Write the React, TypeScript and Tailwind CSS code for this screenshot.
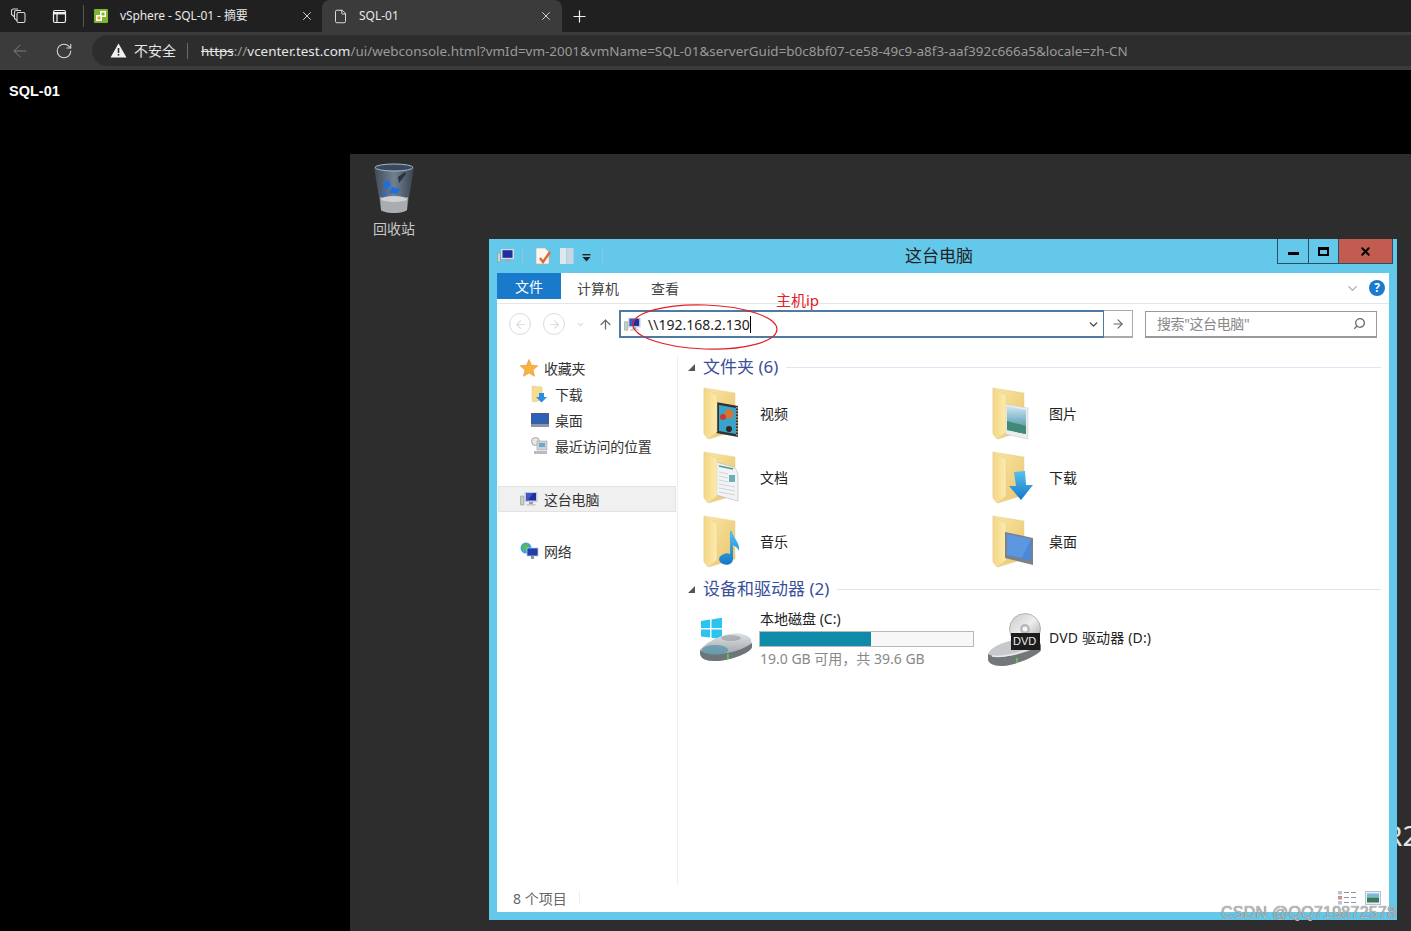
import React from 'react';
import { ArrowLeft, ChevronDown, File, Plus, RotateCw, Search, X, ArrowRight, ArrowUp } from 'lucide-react';

const cjk = { fontFamily: '"Noto Sans", "Noto Sans CJK SC", sans-serif' };

type FolderKind = 'video' | 'picture' | 'doc' | 'download' | 'music' | 'desktop';

const FolderIcon = ({ kind }: { kind: FolderKind }) => (
    <svg width="46" height="56" viewBox="0 0 46 56" className="shrink-0">
        <defs>
            <linearGradient id="fb" x1="0" y1="0" x2="1" y2="1">
                <stop offset="0" stopColor="#fbe7a4" />
                <stop offset="1" stopColor="#e8c46c" />
            </linearGradient>
            <linearGradient id="ff" x1="0" y1="0" x2="1" y2="0">
                <stop offset="0" stopColor="#f5d684" />
                <stop offset="1" stopColor="#fcebb0" />
            </linearGradient>
            <linearGradient id="pic" x1="0" y1="0" x2="0" y2="1">
                <stop offset="0" stopColor="#cfe6f2" />
                <stop offset="0.5" stopColor="#7fb6c8" />
                <stop offset="1" stopColor="#4b8a6c" />
            </linearGradient>
            <linearGradient id="arr" x1="0" y1="0" x2="0" y2="1">
                <stop offset="0" stopColor="#58c0ef" />
                <stop offset="1" stopColor="#1578c8" />
            </linearGradient>
        </defs>
        <polygon points="1,1 32,6 32,44 6,52 1,46" fill="url(#fb)" stroke="#e3cf95" strokeWidth="0.5" />
        {kind === 'video' && (
            <g>
                <polygon points="13,15 35,19 35,50 13,46" fill="#33322f" />
                <polygon points="16,18 33,21 33,47 16,44" fill="#3aa3c9" />
                <circle cx="26" cy="27" r="4.5" fill="#d9752c" />
                <circle cx="20" cy="30" r="3" fill="#c43b3b" />
                <circle cx="26" cy="42" r="3" fill="#2d2a28" />
                <line x1="34" y1="20" x2="34" y2="49" stroke="#a8b49a" strokeWidth="1.5" strokeDasharray="1.5 1.5" />
            </g>
        )}
        {kind === 'picture' && (
            <g>
                <polygon points="13,17 36,21 36,52 13,47" fill="#ececec" stroke="#c4c4c4" strokeWidth="0.5" />
                <polygon points="15,19 34,23 34,47 15,43" fill="url(#pic)" />
                <polygon points="15,34 34,39 34,47 15,43" fill="#3f8a78" />
            </g>
        )}
        {kind === 'doc' && (
            <g>
                <path d="M13,11 L30,16 C34,18 35,22 35,26 L35,50 L13,44 Z" fill="#f2f3f6" stroke="#bcbfc6" strokeWidth="0.7" />
                <line x1="16" y1="15" x2="30" y2="18" stroke="#4f9a8c" strokeWidth="1.6" />
                <rect x="26" y="24" width="6" height="7" fill="#6bb0b8" />
                <g stroke="#c2c6ce" strokeWidth="0.7">
                    <line x1="16" y1="21" x2="25" y2="23" />
                    <line x1="16" y1="25" x2="25" y2="27" />
                    <line x1="16" y1="29" x2="25" y2="31" />
                    <line x1="16" y1="33" x2="32" y2="36" />
                    <line x1="16" y1="37" x2="32" y2="40" />
                    <line x1="16" y1="41" x2="32" y2="44" />
                </g>
            </g>
        )}
        <polygon points="1,1 14,8 14,45 5,52 1,47" fill="url(#ff)" stroke="#e3cf95" strokeWidth="0.5" />
        {kind === 'download' && (
            <polygon points="22,21 33,20 34,34 41,34 29,49 17,35 24,35" fill="url(#arr)" />
        )}
        {kind === 'music' && (
            <g>
                <path d="M27,16 L29,16 C30,24 37,26 36,36 C35,33 32,31 30,30 L30,44 C30,49 24,51 20,49 C15,47 15,42 19,40 C22,38 25,38 27,39 Z" fill="url(#arr)" />
            </g>
        )}
        {kind === 'desktop' && (
            <g>
                <polygon points="13,17 41,23 41,50 13,43" fill="#7d8084" />
                <polygon points="15,19 39,24 39,46 15,40" fill="#4a88dc" />
                <polygon points="15,19 39,24 30,43 15,40" fill="#6ea6e6" opacity="0.5" />
            </g>
        )}
    </svg>
);

const ComputerIcon = ({ size = 18 }: { size?: number }) => (
    <svg width={size} height={size} viewBox="0 0 18 18" className="shrink-0">
        <rect x="0.5" y="6" width="3.5" height="9" rx="0.5" fill="#c9d0c8" stroke="#6f8f76" strokeWidth="0.5" />
        <rect x="4.5" y="2" width="13" height="10" fill="#c7c9d6" />
        <rect x="6" y="3" width="10" height="7.5" fill="#1f2f9f" />
        <polygon points="6,3 13,3 8,10.5 6,10.5" fill="#3f58c8" />
        <rect x="9" y="12" width="4" height="2" fill="#9aa0a8" />
        <rect x="6.5" y="14" width="9" height="1.5" fill="#c2c6cc" />
    </svg>
);

const WinHandle = () => (
    <svg width="18" height="16" viewBox="0 0 18 16">
        <rect x="0.5" y="5" width="3" height="9" fill="#cdd4d0" stroke="#7b9383" strokeWidth="0.5" />
        <rect x="4" y="1" width="13" height="10" fill="#d8dbe4" />
        <rect x="5.5" y="2.2" width="10" height="7.6" fill="#1f2f9f" />
        <rect x="9" y="11" width="4" height="3" fill="#a4aab2" />
    </svg>
);

const CircleNav = ({ dir }: { dir: 'l' | 'r' }) => (
    <div className="w-[22px] h-[22px] rounded-full border border-[#dcdcdc] flex items-center justify-center text-[#dcdcdc]">
        {dir === 'l' ? <ArrowLeft size={13} /> : <ArrowRight size={13} />}
    </div>
);

const CDriveIcon = () => (
    <svg width="54" height="46" viewBox="0 0 54 46" className="shrink-0">
        <defs>
            <linearGradient id="dsk" x1="0" y1="0" x2="0" y2="1">
                <stop offset="0" stopColor="#dfe2e4" />
                <stop offset="1" stopColor="#8d9499" />
            </linearGradient>
        </defs>
        <g fill="#2bc3ef">
            <polygon points="2,4 11,2.6 11,11 2,11" />
            <polygon points="12.5,2.4 23,0.8 23,11 12.5,11" />
            <polygon points="2,12.5 11,12.5 11,20.5 2,19.4" />
            <polygon points="12.5,12.5 23,12.5 23,22 12.5,20.8" />
        </g>
        <path d="M1,33 C6,27 16,20 30,17 C38,15 48,17 52,22 L53,30 C52,36 30,44 16,44 C6,44 1,41 1,36 Z" fill="url(#dsk)" />
        <path d="M1,33 C8,40 38,38 53,26 L53,30 C52,36 30,44 16,44 C6,44 1,41 1,36 Z" fill="#6d7579" />
        <ellipse cx="16" cy="33" rx="13" ry="5" fill="#5c97ad" opacity="0.8" />
        <ellipse cx="32" cy="21" rx="10" ry="3" fill="#8b9398" opacity="0.55" />
        <rect x="28" y="37" width="1.8" height="5" fill="#58d23c" />
    </svg>
);

const DvdIcon = () => (
    <svg width="56" height="54" viewBox="0 0 56 54" className="shrink-0">
        <defs>
            <linearGradient id="cd" x1="0" y1="0" x2="1" y2="1">
                <stop offset="0" stopColor="#c9c9c9" />
                <stop offset="0.5" stopColor="#eeeeee" />
                <stop offset="1" stopColor="#9c9c9c" />
            </linearGradient>
        </defs>
        <path d="M1,41 C4,33 18,28 36,25 C44,24 52,27 54,31 L54,37 C52,42 30,52 15,53 C6,53 1,50 1,46 Z" fill="#c6cacc" />
        <path d="M1,41 C10,47 40,42 54,31 L54,37 C52,42 30,52 15,53 C6,53 1,50 1,46 Z" fill="#71777b" />
        <path d="M5,43 C16,45 34,40 46,34" stroke="#e9ecee" strokeWidth="1.5" fill="none" />
        <rect x="29" y="45" width="1.8" height="5" fill="#58d23c" />
        <circle cx="38" cy="16" r="15.5" fill="url(#cd)" stroke="#8f8f8f" strokeWidth="0.6" />
        <circle cx="38" cy="16" r="5" fill="#b9b9b9" />
        <circle cx="38" cy="16" r="2.5" fill="#f5f5f5" />
        <rect x="24" y="20" width="29" height="17" fill="#1c1c1c" />
    </svg>
);

const NavItem = ({ icon, label, className }: { icon: React.ReactNode; label: string; className: string }) => (
    <div className={`flex items-center h-[26px] text-[14px] tracking-[-0.2px] text-[#333] ${className}`}>
        <span className="w-[24px] flex items-center shrink-0">{icon}</span>
        {label}
    </div>
);

const GroupHeader = ({ title }: { title: string }) => (
    <div className="flex items-center h-[24px] -ml-[1px]">
        <svg width="9" height="9" viewBox="0 0 9 9" className="mr-[6px] shrink-0"><polygon points="8,1 8,8 1,8" fill="#555" /></svg>
        <span className="text-[17px] text-[#3a4f9a] whitespace-nowrap ml-[1px]">{title}</span>
        <div className="flex-1 h-px bg-[#dde6f3] ml-[8px]" />
    </div>
);

const FolderTile = ({ kind, label }: { kind: FolderKind; label: string }) => (
    <div className="flex items-center h-[64px] pl-[1px]">
        <FolderIcon kind={kind} />
        <span className="ml-[11px] mb-[4px] text-[14px] text-[#222]">{label}</span>
    </div>
);

export default function App() {
    return (
        <div className="w-[1411px] h-[931px] overflow-hidden bg-black relative flex flex-col" style={cjk}>
            {/* Browser tabs */}
            <div className="h-[32px] bg-[#202020] flex items-stretch text-[#e8e8e8] text-[12px] shrink-0">
                <div className="w-[36px] flex items-center justify-center">
                    <svg width="18" height="16" viewBox="0 0 18 16" fill="none" stroke="#d8d8d8" strokeWidth="1.1">
                        <rect x="8" y="4.5" width="8" height="10" rx="1.5" />
                        <path d="M8,12.5 L5.5,10.5 V4 C5.5,3 6.5,2.5 7.5,2.5 H12" />
                        <path d="M5.5,9 L2.5,6.5 V3 C2.5,2 3.5,1 4.5,1 H9" />
                    </svg>
                </div>
                <div className="w-[47px] flex items-center justify-center">
                    <svg width="15" height="15" viewBox="0 0 15 15" fill="none" stroke="#f0f0f0" strokeWidth="1.2">
                        <rect x="1.5" y="1.5" width="12" height="12" rx="1.5" />
                        <path d="M1.5,4.2 H13.5" strokeWidth="2.4" />
                        <path d="M5,4 V13.5" />
                    </svg>
                </div>
                <div className="w-px h-[22px] bg-[#555] self-center" />
                <div className="w-[238px] flex items-center pl-[9px] pr-[8px]">
                    <svg width="16" height="16" viewBox="0 0 16 16" className="shrink-0">
                        <rect x="1" y="1" width="14" height="14" rx="1" fill="#7eb62f" />
                        <rect x="7" y="3" width="6" height="6" fill="#fff" />
                        <rect x="8.5" y="4.5" width="3" height="3" fill="#7eb62f" />
                        <rect x="3" y="7" width="6" height="6" fill="#fff" />
                        <rect x="4.5" y="8.5" width="3" height="3" fill="#f1a81e" />
                    </svg>
                    <span className="ml-[11px] flex-1 whitespace-nowrap tracking-[-0.1px]">vSphere - SQL-01 - 摘要</span>
                    <X size={14} strokeWidth={1.6} className="text-[#ddd]" />
                </div>
                <div className="w-[240px] bg-[#3b3b3b] rounded-t-[8px] flex items-center pl-[11px] pr-[9px]">
                    <File size={15} strokeWidth={1.4} className="text-[#f0f0f0]" />
                    <span className="ml-[11px] flex-1">SQL-01</span>
                    <X size={14} strokeWidth={1.6} className="text-[#ddd]" />
                </div>
                <div className="w-[34px] flex items-center justify-center">
                    <Plus size={19} strokeWidth={1.5} className="text-[#f0f0f0]" />
                </div>
            </div>
            {/* Browser toolbar */}
            <div className="h-[38px] bg-[#3b3b3b] flex items-center shrink-0">
                <div className="w-[40px] flex justify-center"><ArrowLeft size={20} strokeWidth={1.2} className="text-[#7d7d7d]" /></div>
                <div className="w-[48px] flex justify-center"><RotateCw size={18} strokeWidth={1.4} className="text-[#d8d8d8]" /></div>
                <div className="flex-1 h-[31px] bg-[#2d2d2d] rounded-l-full ml-[4px] -mt-[1px] flex items-center pl-[18px]">
                    <svg width="17" height="15" viewBox="0 0 17 15" className="shrink-0">
                        <path d="M8.5,0.5 L16.5,14.5 H0.5 Z" fill="#f2f2f2" />
                        <rect x="7.7" y="5" width="1.6" height="5" fill="#2d2d2d" />
                        <rect x="7.7" y="11" width="1.6" height="1.6" fill="#2d2d2d" />
                    </svg>
                    <span className="ml-[7px] text-[14px] text-[#e6e6e6]">不安全</span>
                    <div className="w-px h-[16px] bg-[#6b6b6b] ml-[11px]" />
                    <span className="ml-[13px] mt-[2px] text-[13.45px] whitespace-nowrap text-[#9a9a9a]">
                        <span className="line-through text-[#e6e6e6]">https</span>
                        ://<span className="text-[#e6e6e6]">vcenter.test.com</span>
                        /ui/webconsole.html?vmId=vm-2001&amp;vmName=SQL-01&amp;serverGuid=b0c8bf07-ce58-49c9-a8f3-aaf392c666a5&amp;locale=zh-CN
                    </span>
                </div>
            </div>
            {/* Console header */}
            <div className="h-[84px] pl-[9px] pt-[13px] text-white text-[14.5px] font-bold leading-[17px] shrink-0" style={{ fontFamily: '"Liberation Sans", sans-serif' }}>
                SQL-01
            </div>
            {/* Remote desktop */}
            <div className="flex-1 ml-[350px] bg-[#2d2d2d] relative">
                <div className="absolute left-[20px] top-[9px] w-[48px] flex flex-col items-center">
                    <svg width="42" height="52" viewBox="0 0 42 52">
                        <defs>
                            <linearGradient id="bin" x1="0" y1="0" x2="1" y2="0">
                                <stop offset="0" stopColor="#3f4a56" />
                                <stop offset="0.5" stopColor="#6f8292" />
                                <stop offset="1" stopColor="#39434e" />
                            </linearGradient>
                        </defs>
                        <path d="M1,4 C8,0 34,0 41,4 L34,47 C30,51 12,51 8,47 Z" fill="url(#bin)" />
                        <ellipse cx="21" cy="4.5" rx="19" ry="3.5" fill="#37495c" stroke="#a9b6c2" strokeWidth="1" />
                        <path d="M10,20 L16,17 L18,23 L13,27 Z M19,24 L27,26 L24,31 L16,30 Z M9,27 L13,30 L12,34 L10,32 Z" fill="#1f6fe0" />
                        <path d="M25,14 L32,9 L33,11 L26,20 Z" fill="#2b333c" />
                        <path d="M7,34 C12,36 30,36 35,34 L34,47 C30,51 12,51 8,47 Z" fill="#a9adb1" />
                        <ellipse cx="21" cy="36" rx="13" ry="3" fill="#cfd1d3" />
                    </svg>
                    <span className="text-[14px] text-[#c8c8c8] whitespace-nowrap mt-[5px] leading-[18px]">回收站</span>
                </div>
                <span className="absolute left-[1035px] top-[665px] text-[28px] text-[#e4e4e4] leading-[32px] whitespace-nowrap">R2</span>

                {/* Explorer window */}
                <div className="absolute left-[139px] top-[85px] w-[908px] h-[681px] bg-[#63c8ea] flex flex-col px-[8px] pb-[8px]">
                    {/* Title bar */}
                    <div className="h-[34px] flex items-center relative shrink-0">
                        <WinHandle />
                        <div className="w-px h-[14px] bg-[#9dc3d6] ml-[7px]" />
                        <svg width="18" height="18" viewBox="0 0 18 18" className="ml-[11px]">
                            <path d="M2,1 H11 L15,5 V17 H2 Z" fill="#fbf7ef" stroke="#b9b2a6" strokeWidth="0.7" />
                            <path d="M6,11 L9,15 L16,5" stroke="#e0663a" strokeWidth="2.4" fill="none" />
                        </svg>
                        <svg width="16" height="18" viewBox="0 0 16 18" className="ml-[7px]">
                            <rect x="1" y="1" width="6.5" height="16" fill="#dfe7ef" />
                            <rect x="8" y="1" width="6.5" height="16" fill="#c9d6e2" />
                        </svg>
                        <svg width="9" height="8" viewBox="0 0 9 8" className="ml-[7px] mt-[3px]">
                            <rect x="0.5" y="0" width="8" height="1.4" fill="#222" />
                            <polygon points="0.5,3 8.5,3 4.5,7.5" fill="#222" />
                        </svg>
                        <div className="w-px h-[14px] bg-[#9dc3d6] ml-[11px]" />
                        <div className="flex-1 text-center text-[17px] text-[#222] pr-[2px]">这台电脑</div>
                        <div className="self-start flex h-[25px] -mr-[4px] border border-t-0 border-[#2a4f63] w-[116px] shrink-0">
                            <div className="w-[31px] border-r border-[#2a4f63] flex items-center justify-center">
                                <div className="w-[11px] h-[3px] bg-black mt-[4px]" />
                            </div>
                            <div className="w-[30px] border-r border-[#2a4f63] flex items-center justify-center">
                                <div className="w-[11px] h-[9px] border-2 border-t-[3px] border-black" />
                            </div>
                            <div className="flex-1 bg-[#c25b50] flex items-center justify-center">
                                <X size={13} strokeWidth={3.5} className="text-black" />
                            </div>
                        </div>
                    </div>
                    {/* Explorer body */}
                    <div className="flex-1 bg-white flex flex-col min-h-0">
                        <div className="h-[31px] border-b border-[#e5e5e5] flex items-start shrink-0 text-[14px] text-[#444]">
                            <div className="w-[64px] h-[26px] bg-[#1979ca] text-white flex items-center justify-center">文件</div>
                            <span className="ml-[16px] leading-[31px]">计算机</span>
                            <span className="ml-[32px] leading-[31px]">查看</span>
                            <div className="flex-1" />
                            <ChevronDown size={15} strokeWidth={2} className="text-[#aaa] mt-[8px]" />
                            <div className="w-[16px] h-[16px] rounded-full bg-[#1c79d0] text-white text-[12px] font-bold flex items-center justify-center mt-[7px] ml-[9px] mr-[4px] leading-none">?</div>
                        </div>
                        {/* Address row */}
                        <div className="h-[34px] flex items-center shrink-0 relative mt-[3px]">
                            <div className="ml-[12px]"><CircleNav dir="l" /></div>
                            <div className="ml-[12px]"><CircleNav dir="r" /></div>
                            <ChevronDown size={9} strokeWidth={3} className="text-[#d8d8d8] ml-[11px]" />
                            <ArrowUp size={15} strokeWidth={2} className="text-[#666] ml-[13px]" />
                            <div className="ml-[6px] w-[485px] h-[28px] border-2 border-[#4f7ba3] border-r flex items-center pl-[3px] pr-[3px] bg-white">
                                <ComputerIcon size={17} />
                                <span className="ml-[7px] text-[14px] text-[#222] whitespace-nowrap">\\192.168.2.130</span>
                                <div className="w-px h-[17px] bg-black" />
                                <div className="flex-1" />
                                <ChevronDown size={13} strokeWidth={2.6} className="text-[#444]" />
                            </div>
                            <div className="w-[29px] h-[28px] border border-l-0 border-[#aaa] border-b-2 flex items-center justify-center">
                                <ArrowRight size={14} strokeWidth={2} className="text-[#666]" />
                            </div>
                            <div className="ml-[12px] w-[232px] h-[27px] border border-[#999] border-b-2 flex items-center pl-[11px] pr-[10px] text-[14px] text-[#888]">
                                <span className="flex-1 tracking-[-0.4px]">搜索"这台电脑"</span>
                                <Search size={13} strokeWidth={2.4} className="text-[#666] -scale-x-100" />
                            </div>
                        </div>
                        <div className="flex flex-1 min-h-0">
                            {/* Navigation pane */}
                            <div className="w-[181px] mt-[14px] mb-[26px] border-r border-[#f0f0f0] flex flex-col shrink-0">
                                <NavItem
                                    className="pl-[23px]"
                                    label="收藏夹"
                                    icon={<svg width="18" height="18" viewBox="0 0 18 18"><polygon points="9,0.5 11.5,6.3 17.8,6.8 13,11 14.5,17.3 9,14 3.5,17.3 5,11 0.2,6.8 6.5,6.3" fill="#f6b33f" stroke="#e88f2a" strokeWidth="0.6" /></svg>}
                                />
                                <NavItem
                                    className="pl-[34px]"
                                    label="下载"
                                    icon={<svg width="18" height="18" viewBox="0 0 18 18"><path d="M1,1 L11,2 V15 L3,17 L1,16 Z" fill="#f5dc90" stroke="#d8c078" strokeWidth="0.4" /><polygon points="8,8 13,8 13,12 16,12 10.5,17.5 5,12 8,12" fill="#2a8ee0" /></svg>}
                                />
                                <NavItem
                                    className="pl-[34px]"
                                    label="桌面"
                                    icon={<svg width="18" height="14" viewBox="0 0 18 14"><rect x="0" y="0" width="18" height="14" fill="#4a5c78" /><rect x="1" y="1" width="16" height="9.5" fill="#2e62b8" /><rect x="0" y="11" width="18" height="3" fill="#8a97a8" /></svg>}
                                />
                                <NavItem
                                    className="pl-[34px]"
                                    label="最近访问的位置"
                                    icon={<svg width="18" height="18" viewBox="0 0 18 18"><circle cx="4.5" cy="4.5" r="4" fill="#e6e6e6" stroke="#8a8a8a" strokeWidth="0.7" /><rect x="6" y="4" width="10" height="9" fill="#ccd3d8" stroke="#8f979c" strokeWidth="0.5" /><rect x="8" y="6" width="6" height="4" fill="#6fa7c8" /><rect x="3" y="14" width="13" height="3" fill="#b8bcc0" /></svg>}
                                />
                                <div className="mt-[27px] ml-[1px] h-[26px] w-[178px] bg-[#f0f0f0] border border-[#e2e2e2] flex items-center pl-[21px] text-[14px] tracking-[-0.2px] text-[#333]">
                                    <span className="w-[24px]"><ComputerIcon /></span>
                                    这台电脑
                                </div>
                                <div className="mt-[26px]">
                                    <NavItem
                                        className="pl-[23px]"
                                        label="网络"
                                        icon={<svg width="19" height="18" viewBox="0 0 19 18"><circle cx="6" cy="6" r="5.5" fill="#3fa6d8" /><path d="M2,3 C4,4 6,3 7,1 C9,3 8,6 6,7 C4,9 2,7 2,3 Z" fill="#5cbb4a" /><rect x="7" y="6" width="11" height="8" fill="#1f3fae" stroke="#c4c8d2" strokeWidth="0.8" /><rect x="11" y="14" width="3" height="3" fill="#8d939c" /></svg>}
                                    />
                                </div>
                            </div>
                            {/* Content pane */}
                            <div className="flex-1 min-w-0 pl-[10px] pr-[8px] pt-[14px] flex flex-col">
                                <GroupHeader title="文件夹 (6)" />
                                <div className="grid grid-cols-[289px_1fr] pl-[14px] mt-[4px]">
                                    <FolderTile kind="video" label="视频" />
                                    <FolderTile kind="picture" label="图片" />
                                    <FolderTile kind="doc" label="文档" />
                                    <FolderTile kind="download" label="下载" />
                                    <FolderTile kind="music" label="音乐" />
                                    <FolderTile kind="desktop" label="桌面" />
                                </div>
                                <div className="mt-[2px]"><GroupHeader title="设备和驱动器 (2)" /></div>
                                <div className="flex mt-[4px] pl-[11px]">
                                    <div className="flex items-center w-[289px] h-[70px]">
                                        <CDriveIcon />
                                        <div className="ml-[7px] w-[214px] text-[14px]">
                                            <div className="text-[#222] leading-[16px]">本地磁盘 (C:)</div>
                                            <div className="h-[16px] mt-[4px] -ml-[1px] border border-[#b8b8b8] bg-[#f7f7f7]">
                                                <div className="h-full w-[52%] bg-[#0f8aa8]" />
                                            </div>
                                            <div className="mt-[2px] text-[#888] leading-[20px] whitespace-nowrap">19.0 GB 可用，共 39.6 GB</div>
                                        </div>
                                    </div>
                                    <div className="flex items-center h-[70px] -ml-[1px]">
                                        <div className="relative">
                                            <DvdIcon />
                                            <span className="absolute left-[26px] top-[20px] text-[11px] text-[#eee] leading-[17px]" style={{ fontFamily: '"Liberation Sans", sans-serif' }}>DVD</span>
                                        </div>
                                        <span className="ml-[6px] mb-[6px] text-[14px] tracking-[0.15px] text-[#222] whitespace-nowrap">DVD 驱动器 (D:)</span>
                                    </div>
                                </div>
                                <div className="flex-1" />
                                {/* Status bar */}
                                <div className="h-[28px] -ml-[191px] -mr-[8px] flex items-center pl-[16px] pr-[8px] text-[14px] text-[#666] shrink-0">
                                    8 个项目
                                    <div className="w-px h-[14px] bg-[#eee] ml-[12px]" />
                                    <div className="flex-1" />
                                    <svg width="18" height="14" viewBox="0 0 18 14" fill="#8a97a8">
                                        <rect x="0" y="0" width="4" height="3.5" fill="#b9c5d6" />
                                        <rect x="0" y="5" width="4" height="3.5" fill="#d88a8a" />
                                        <rect x="0" y="10" width="4" height="3.5" fill="#b9c5d6" />
                                        <rect x="6" y="1" width="5" height="1" /><rect x="13" y="1" width="5" height="1" />
                                        <rect x="6" y="6" width="5" height="1" /><rect x="13" y="6" width="5" height="1" />
                                        <rect x="6" y="11" width="5" height="1" /><rect x="13" y="11" width="5" height="1" />
                                    </svg>
                                    <svg width="16" height="14" viewBox="0 0 16 14" className="ml-[9px]">
                                        <rect x="0.5" y="0.5" width="15" height="13" fill="#e8eef5" stroke="#b4c4d8" />
                                        <rect x="2" y="2.5" width="12" height="4" fill="#7fb6d8" />
                                        <rect x="2" y="6.5" width="12" height="5" fill="#3a7a5a" />
                                    </svg>
                                </div>
                            </div>
                        </div>
                    </div>
                </div>
            </div>

            {/* Red annotation over the address box */}
            <svg className="absolute left-[630px] top-[302px] pointer-events-none" width="150" height="50" viewBox="0 0 150 50">
                <ellipse cx="75" cy="25" rx="72" ry="22" fill="none" stroke="#e0202a" strokeWidth="1.2" transform="rotate(2 75 25)" />
            </svg>
            <span className="absolute left-[776px] top-[290px] text-[15px] leading-[20px] text-[#e0202a]">主机ip</span>

            {/* Site watermark */}
            <span className="absolute left-[1221px] top-[903px] text-[16px] leading-[20px] tracking-[0.25px] text-[#bcbcbc] whitespace-nowrap [text-shadow:0_0_1px_#555]" style={{ fontFamily: '"Liberation Sans", sans-serif' }}>
                CSDN @QQ719872578
            </span>
        </div>
    );
}
